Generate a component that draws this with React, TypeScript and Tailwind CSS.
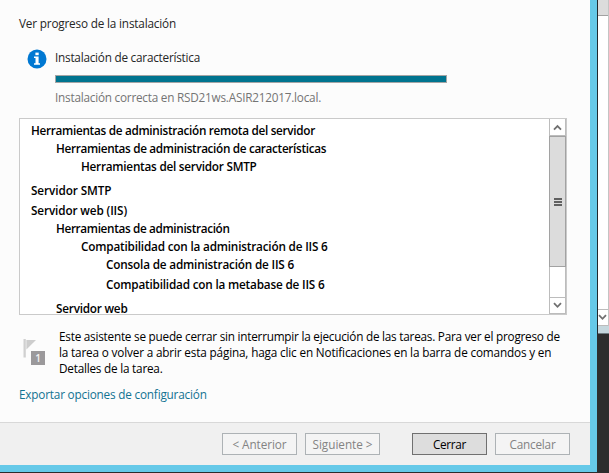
import type { ReactNode } from "react";

function Chevron({ up = false }: { up?: boolean }) {
  return (
    <svg width="9" height="7" viewBox="0 0 9 7" fill="none" stroke="#707070" strokeWidth="1.8">
      <path d={up ? "M1 5.6 4.5 2 8 5.6" : "M1 1.2 4.5 4.8 8 1.2"} />
    </svg>
  );
}

function InfoIcon() {
  return (
    <svg width="20" height="20" viewBox="0 0 20 20">
      <circle cx="10" cy="10" r="9.5" fill="#0078d2" />
      <rect x="8.4" y="3.6" width="3.3" height="2.6" fill="#fff" />
      <path d="M7 7.6h4.6v6.6H13v1.5H7v-1.5h1.5V9.1H7z" fill="#fff" />
    </svg>
  );
}

function FlagIcon() {
  return (
    <div className="relative h-[27px] w-[23px]">
      <svg width="23" height="27" viewBox="0 0 23 27">
        <rect x="0.5" y="0" width="2.3" height="18.5" fill="#d0d0d0" />
        <path d="M3.4 1H13L3.4 10.5z" fill="#cdcdcd" />
      </svg>
      <span className="absolute top-[12px] left-[8px] flex h-[14px] w-[14px] items-center justify-center bg-[#9b999b] font-['Open_Sans',sans-serif] text-[10px] leading-none font-semibold text-[#f2f2f2]">
        1
      </span>
    </div>
  );
}

function Item({ className, children }: { className: string; children: ReactNode }) {
  return <div className={`h-[18px] leading-[18px] ${className}`}>{children}</div>;
}

function Button({ className, children }: { className: string; children: ReactNode }) {
  return (
    <button className={`flex h-[22px] w-[75px] items-center justify-center border ${className}`}>
      {children}
    </button>
  );
}

export default function App() {
  return (
    <div className="flex h-[473px] w-[609px] overflow-hidden bg-[#2d2d2d] font-['Open_Sans','Noto_Sans',sans-serif] text-[11.75px] leading-4 whitespace-nowrap text-black">
      <div className="flex h-[472px] w-[597px] shrink-0 flex-col border-r-[7px] border-b-[7px] border-[#66c9e8] bg-[#fcfcfc]">
        <div className="h-[422px] pt-[15px] pl-[19px]">
          <h1 className="tracking-[-0.175px] text-[#262626]">Ver progreso de la instalación</h1>

          <div className="mt-[18px] flex h-[69px]">
            <div className="w-[36px] pl-[8px]">
              <InfoIcon />
            </div>
            <div>
              <div className="tracking-[-0.23px] text-[#262626]">Instalación de característica</div>
              <div className="mt-[10px] h-[8px] w-[392px] border border-[#a5a5a5] bg-[#00748f]" />
              <div className="mt-[6px] tracking-[-0.222px] text-[#747474]">
                Instalación correcta en RSD21ws.ASIR212017.local.
              </div>
            </div>
          </div>

          <div className="flex h-[197px] w-[548px] overflow-hidden border border-[#cacaca] bg-white">
            <div className="flex-1 overflow-hidden pt-[2px] pl-[11px] font-semibold">
              <Item className="tracking-[-0.298px]">Herramientas de administración remota del servidor</Item>
              <Item className="pl-[25px] tracking-[-0.333px]">Herramientas de administración de características</Item>
              <Item className="pl-[50px] tracking-[-0.24px]">Herramientas del servidor SMTP</Item>
              <Item className="mt-[6px] tracking-[-0.09px]">Servidor SMTP</Item>
              <Item className="mt-[2px] tracking-[-0.126px]">Servidor web (IIS)</Item>
              <Item className="pl-[25px] tracking-[-0.35px]">Herramientas de administración</Item>
              <Item className="pl-[50px] tracking-[-0.19px]">Compatibilidad con la administración de IIS 6</Item>
              <Item className="pl-[75px] tracking-[-0.182px]">Consola de administración de IIS 6</Item>
              <Item className="mt-[2px] pl-[75px] tracking-[-0.19px]">Compatibilidad con la metabase de IIS 6</Item>
              <Item className="mt-[6px] pl-[25px] tracking-[-0.22px]">Servidor web</Item>
            </div>
            <div className="flex w-[17px] shrink-0 flex-col border-x border-[#bcbcbc] bg-white">
              <div className="flex h-[17px] items-center justify-center border-b border-[#bcbcbc]">
                <Chevron up />
              </div>
              <div className="-mx-px flex h-[131px] flex-col items-center justify-center gap-px border border-[#a2a2a2] bg-[#dcdcdc]">
                <div className="h-[2px] w-[8px] bg-[#606060]" />
                <div className="h-[2px] w-[8px] bg-[#606060]" />
                <div className="h-[2px] w-[8px] bg-[#606060]" />
              </div>
              <div className="mt-auto flex h-[17px] items-center justify-center border-y border-[#bcbcbc]">
                <Chevron />
              </div>
            </div>
          </div>

          <div className="mt-[13px] flex">
            <div className="w-[40px] pt-[11px] pl-[4px]">
              <FlagIcon />
            </div>
            <p>
              <span className="block tracking-[-0.23px]">
                Este asistente se puede cerrar sin interrumpir la ejecución de las tareas. Para ver el progreso de
              </span>
              <span className="block tracking-[-0.16px]">
                la tarea o volver a abrir esta página, haga clic en Notificaciones en la barra de comandos y en
              </span>
              <span className="block tracking-[-0.22px]">Detalles de la tarea.</span>
            </p>
          </div>
          <a className="mt-[10px] block tracking-[-0.19px] text-[#137392]">Exportar opciones de configuración</a>
        </div>

        <div className="flex h-[43px] border-t border-[#d8d8d8] bg-[#f0f0f0] pt-[10px] pl-[222px]">
          <Button className="border-[#adb2b5] bg-[#f4f4f4] tracking-[-0.083px] text-[#838383]">&lt; Anterior</Button>
          <Button className="ml-[8px] border-[#adb2b5] bg-[#f4f4f4] tracking-[-0.03px] text-[#838383]">
            Siguiente &gt;
          </Button>
          <Button className="ml-[32px] border-[#707070] bg-[#dddddd] tracking-[-0.32px]">Cerrar</Button>
          <Button className="ml-[8px] border-[#adb2b5] bg-[#f4f4f4] tracking-[-0.2px] text-[#838383]">Cancelar</Button>
        </div>
      </div>

      <div className="flex h-[334px] flex-1 flex-col border-l border-[#20282d] bg-white">
        <div className="flex h-[326px] flex-col border-r border-[#c4c4c4]">
          <div className="h-[16px] border-b border-[#a2a2a2] bg-[#dcdcdc]" />
          <div className="mt-auto flex h-[17px] items-center border-y border-[#bcbcbc]">
            <Chevron />
          </div>
        </div>
        <div className="h-[8px] border-b border-[#6d7b80] bg-[#c5d7dd]" />
      </div>
    </div>
  );
}
